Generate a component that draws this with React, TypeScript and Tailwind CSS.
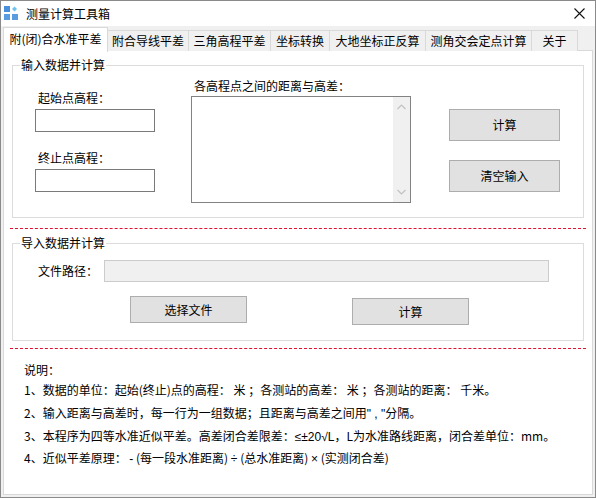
import React from "react";

const tabs = [
  { label: "附合导线平差", w: "w-[82px]" },
  { label: "三角高程平差", w: "w-[83px]" },
  { label: "坐标转换", w: "w-[60px]" },
  { label: "大地坐标正反算", w: "w-[97px]" },
  { label: "测角交会定点计算", w: "w-[107px]" },
  { label: "关于", w: "w-[47px]" },
];

const AppIcon = () => (
  <svg width="15" height="15" viewBox="0 0 15 15">
    <rect x="0" y="0" width="6" height="6" fill="#4a8fdb" />
    <path d="M10.5 0.5 L13 3 L10.5 5.5 L8 3 Z" fill="#6fc3ee" />
    <rect x="9.5" y="2.3" width="2" height="1.4" fill="#6fc3ee" />
    <rect x="0" y="8" width="6" height="6" fill="#5b9be0" />
    <rect x="8" y="8" width="6" height="6" fill="#5b9be0" />
  </svg>
);

const Btn: React.FC<{ label: string; className?: string }> = ({ label, className }) => (
  <div
    className={`flex items-center justify-center bg-[#e1e1e1] border border-[#adadad] text-[12px] text-black ${className ?? ""}`}
  >
    {label}
  </div>
);

const GroupBox: React.FC<{ title: string; className?: string; children: React.ReactNode }> = ({
  title,
  className,
  children,
}) => (
  <div className={`relative mx-[8px] border border-[#dcdcdc] ${className ?? ""}`}>
    <span className="absolute -top-[9px] left-[7px] bg-white px-[1px] text-[12px] leading-[16px] text-black">
      {title}
    </span>
    {children}
  </div>
);

const latin = "font-['Liberation_Sans',sans-serif]";

const App: React.FC = () => {
  return (
    <div className="w-[596px] h-[498px] flex flex-col bg-[#f0f0f0] border border-[#8a8a8a] font-['Noto_Sans_CJK_SC','Microsoft_YaHei',sans-serif] text-[12px] leading-[16px] text-black">
      {/* Title bar */}
      <div className="h-[25px] bg-white flex items-center pl-[3px] pr-[10px]">
        <AppIcon />
        <span className="ml-[7px] text-[12px]">测量计算工具箱</span>
        <div className="flex-1" />
        <svg width="11" height="11" viewBox="0 0 11 11">
          <path d="M0.5 0.5 L10.5 10.5 M10.5 0.5 L0.5 10.5" stroke="#111" strokeWidth="1.1" />
        </svg>
      </div>

      {/* Tabs */}
      <div className="h-[25px] flex items-start px-[2px] relative z-10">
        <div className="mt-[1px] h-[25px] w-[105px] bg-white border border-[#d9d9d9] border-b-0 flex items-center justify-center pb-[2px]">
          附(闭)合水准平差
        </div>
        {tabs.map((t) => (
          <div
            key={t.label}
            className={`mt-[4px] h-[21px] ${t.w} -ml-px bg-[#f0f0f0] border border-[#d9d9d9] border-b-0 flex items-center justify-center`}
          >
            {t.label}
          </div>
        ))}
      </div>

      {/* Tab panel */}
      <div className="flex-1 mx-[2px] mb-[2px] -mt-px bg-white border border-[#d9d9d9] flex flex-col">
        <GroupBox title="输入数据并计算" className="mt-[14px] h-[153px]">
          <div className="flex items-start pl-[22px]">
            <div className="mt-[24px] flex flex-col w-[120px]">
              <span className="pl-[3px]">起始点高程：</span>
              <div className="mt-[3px] h-[23px] border border-[#7a7a7a] bg-white" />
              <span className="pl-[3px] mt-[18px]">终止点高程：</span>
              <div className="mt-[3px] h-[23px] border border-[#7a7a7a] bg-white" />
            </div>
            <div className="ml-[36px] mt-[12px] flex flex-col w-[220px]">
              <span className="pl-[3px]">各高程点之间的距离与高差：</span>
              <div className="mt-[2px] h-[107px] border border-[#828282] bg-white flex justify-end">
                <div className="w-[17px] bg-[#f0f0f0] flex flex-col items-center justify-between py-[7px]">
                  <svg width="9" height="6" viewBox="0 0 9 6">
                    <path d="M0.5 5 L4.5 1 L8.5 5" stroke="#c2c2c2" strokeWidth="1.2" fill="none" />
                  </svg>
                  <svg width="9" height="6" viewBox="0 0 9 6">
                    <path d="M0.5 1 L4.5 5 L8.5 1" stroke="#c2c2c2" strokeWidth="1.2" fill="none" />
                  </svg>
                </div>
              </div>
            </div>
            <div className="ml-[38px] mt-[43px] flex flex-col">
              <Btn label="计算" className="w-[111px] h-[32px]" />
              <Btn label="清空输入" className="w-[111px] h-[32px] mt-[19px]" />
            </div>
          </div>
        </GroupBox>

        <div className="mt-[10px] mx-[6px] border-t border-dashed border-[#e0102f]" />

        <GroupBox title="导入数据并计算" className="mt-[14px] h-[98px]">
          <div className="mt-[16px] flex items-center pl-[25px]">
            <span className="w-[66px]">文件路径：</span>
            <div className="w-[445px] h-[22px] bg-[#f0f0f0] border border-[#cccccc]" />
          </div>
          <div className="mt-[14px] flex items-start pl-[117px]">
            <Btn label="选择文件" className="w-[117px] h-[27px]" />
            <Btn label="计算" className="w-[117px] h-[27px] ml-[105px] mt-[2px]" />
          </div>
        </GroupBox>

        <div className="mt-[7px] mx-[6px] border-t border-dashed border-[#e0102f]" />

        {/* Notes */}
        <div className="pl-[20px] mt-[13px] flex flex-col">
          <span>说明：</span>
          <span className="mt-[4px]">1、数据的单位：起始(终止)点的高程： 米 ；各测站的高差： 米 ；各测站的距离： 千米。</span>
          <span className="mt-[7px]">
            2、输入距离与高差时，每一行为一组数据；且距离与高差之间用<span className={latin}>" , "</span>分隔。
          </span>
          <span className="mt-[6px]">
            3、本程序为四等水准近似平差。高差闭合差限差：<span className={latin}>≤±20√L</span>，L为水准路线距离，闭合差单位：mm。
          </span>
          <span className="mt-[5px]">
            4、近似平差原理： <span className={latin}>-</span> (每一段水准距离) <span className={latin}>÷</span> (总水准距离){" "}
            <span className={latin}>×</span> (实测闭合差)
          </span>
        </div>
      </div>
    </div>
  );
};

export default App;
